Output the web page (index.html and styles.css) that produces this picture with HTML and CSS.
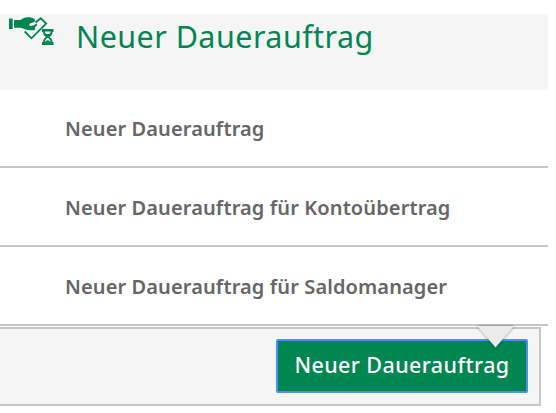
FILE: index.html
```html
<!DOCTYPE html>
<html lang="de">
<head>
<meta charset="utf-8">
<title>Neuer Dauerauftrag</title>
<link rel="stylesheet" href="styles.css">
</head>
<body>
<main class="panel">
  <header class="head">
    <svg class="icon" viewBox="0 0 48 32" aria-hidden="true">
      <path class="fill" d="M1 4.500h3.700v10.600H1zM6 6h6.500C14.500 4.300 17 3.200 19.500 3.200c3 0 5.500.5 7 1.800 1 1 .5 2.700-.8 3.200L22 9.500c-1.400.8-.8 2.700.6 2.500 2-.2 4-.8 5.200-2.200 1-.8 1.700.3 1.200 1.200-.4.9-1.300 1.600-2.200 2.200.8.600.5 3-1 3-3.300.2-6.500-.1-8.800-1-1.800-.7-3.500-1.300-5.100-1.400H6z"/>
      <path class="line" d="M27.500 8.500L32.700 4.300 38.200 9.500 23.500 24.300 16.700 17.500"/>
      <path class="fill" d="M34 15h11.500v3h-1.100c0 2.400-1 3.900-2.800 5 1.800 1.100 2.800 2.600 2.800 5h1.100v3H34v-3h1.100c0-2.400 1-3.900 2.800-5-1.800-1.100-2.800-2.600-2.800-5H34z"/>
      <path class="hole" d="M36.800 17.500h5.900c-.1 1.200-.6 2-1.400 2.500h-3.100c-.8-.5-1.300-1.300-1.400-2.500zM39.300 24h.9c1 1.100 2.300 2 2.500 3.800l-2.900-1.800-3 1.800c.2-1.800 1.500-2.700 2.500-3.800z"/>
    </svg>
    <h1 class="title">Neuer Dauerauftrag</h1>
  </header>
  <nav class="list">
    <a class="item">Neuer Dauerauftrag</a>
    <a class="item">Neuer Dauerauftrag für Kontoübertrag</a>
    <a class="item">Neuer Dauerauftrag für Saldomanager</a>
  </nav>
  <footer class="foot">
    <button class="button">Neuer Dauerauftrag</button>
  </footer>
  <svg class="arrow" viewBox="0 0 44 26" aria-hidden="true">
    <path d="M4 0H41L22.500 21.500z"/>
  </svg>
</main>
</body>
</html>
```

FILE: styles.css
```css
* { box-sizing: border-box; }
body { margin: 0; background: #fff; font-family: "Noto Sans", sans-serif; }
.panel { position: relative; width: 548px; padding-top: 14px; }
.head { display: flex; align-items: flex-start; height: 76px; padding-left: 8px; background: #f5f5f5; }
.icon { width: 48px; height: 32px; flex: none; }
.fill { fill: #008651; }
.line { fill: none; stroke: #008651; stroke-width: 1.8; }
.hole { fill: #f5f5f5; }
.title { margin: 0 0 0 20px; color: #008651; font-size: 30.5px; font-weight: 400; letter-spacing: .45px; line-height: 44px; white-space: nowrap; }
.list { display: flex; flex-direction: column; }
.item { height: 79px; padding-left: 65px; border-bottom: 2px solid #c6c6c6; color: #666; font-size: 20px; font-weight: 600; letter-spacing: .11px; line-height: 79px; white-space: nowrap; }
.item:first-child { height: 78px; line-height: 77px; }
.foot { display: flex; justify-content: flex-end; width: 541px; height: 79px; margin-top: 1px; padding: 10px 11px 0 0; border: 2px solid #c6c6c6; border-left: 0; background: #f5f5f5; }
.button { width: 252px; height: 54px; padding: 0 0 2px; border: 2px solid #4c90f5; border-radius: 2px; background: #008651; color: #fff; font: 500 21.5px/48px "Noto Sans", sans-serif; letter-spacing: .4px; white-space: nowrap; }
.arrow { position: absolute; top: 326px; left: 473px; width: 44px; height: 26px; filter: drop-shadow(0 0 1.5px rgba(0,0,0,.45)); }
.arrow path { fill: #ebebeb; }
```
